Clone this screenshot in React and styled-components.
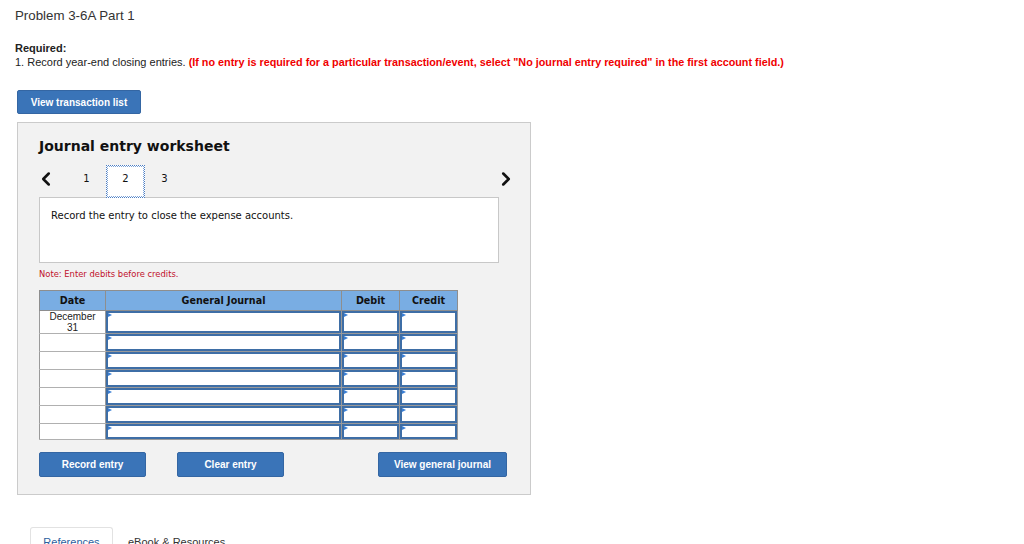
import React from "react";
import styled, { createGlobalStyle } from "styled-components";
import { ChevronLeft, ChevronRight } from "lucide-react";

const GlobalStyle = createGlobalStyle`
  body {
    margin: 0;
    background: #ffffff;
    font-family: "Liberation Sans", Arial, sans-serif;
    color: #333;
  }
`;

const Page = styled.div`
  padding: 8px 0 0 15px;
  width: 1009px;
  height: 536px;
  overflow: hidden;
`;

const Title = styled.h1`
  margin: 0;
  font-size: 13.3px;
  line-height: 16px;
  font-weight: normal;
  color: #333;
`;

const Required = styled.div`
  margin-top: 17px;
  font-size: 11px;
  line-height: 14px;
  color: #222;
`;

const Bold = styled.div`
  font-weight: bold;
`;

const Red = styled.span`
  color: #f00000;
  font-weight: bold;
  font-size: 10.8px;
`;

const BlueButton = styled.button`
  height: ${(p) => p.h || 25}px;
  width: ${(p) => p.w}px;
  padding: 0;
  border: 1px solid #3466a3;
  border-radius: 2px;
  background: #3a74b8;
  color: #fff;
  font-family: "Liberation Sans", Arial, sans-serif;
  font-size: 10px;
  font-weight: bold;
`;

const TopButton = styled(BlueButton)`
  margin: 21px 0 0 2px;
  display: block;
`;

const Panel = styled.div`
  margin: 8px 0 0 2px;
  width: 470px;
  height: 356px;
  border: 1px solid #cbcbcb;
  background: #f2f2f2;
  padding: 15px 21px 0 21px;
`;

const PanelTitle = styled.h2`
  margin: 0;
  font-family: "DejaVu Sans", Verdana, sans-serif;
  font-size: 14px;
  line-height: 17px;
  font-weight: bold;
  color: #111;
`;

const Pager = styled.div`
  margin-top: 10px;
  height: 33px;
  display: flex;
  align-items: center;
  position: relative;
  z-index: 1;
`;

const Arrow = styled.div`
  width: 28px;
  display: flex;
  align-items: center;
  padding-bottom: 6px;
  justify-content: ${(p) => (p.right ? "flex-end" : "flex-start")};
  color: #111;
  margin-left: ${(p) => (p.right ? "auto" : "-4px")};
  margin-right: ${(p) => (p.right ? "-8px" : "4px")};
`;

const PageTab = styled.div`
  width: 39px;
  height: 33px;
  box-sizing: border-box;
  display: flex;
  align-items: center;
  justify-content: center;
  padding-bottom: 6px;
  font-family: "DejaVu Sans", Verdana, sans-serif;
  font-size: 10px;
  color: #111;
  background: ${(p) => (p.active ? "#fff" : "transparent")};
  border: ${(p) => (p.active ? "1px dotted #4a7cc2" : "1px solid transparent")};
  outline: ${(p) => (p.active ? "1px dotted #7ea4d8" : "none")};
  outline-offset: -2px;
`;

const Description = styled.div`
  margin-top: -1px;
  border: 1px solid #c8c8c8;
  background: #fff;
  padding: 12px 0 0 11px;
  box-sizing: border-box;
  height: 66px;
  width: 460px;
  font-family: "DejaVu Sans", Verdana, sans-serif;
  font-size: 10px;
  color: #111;
`;

const Note = styled.div`
  margin-top: 5px;
  font-family: "DejaVu Sans", Verdana, sans-serif;
  font-size: 8.4px;
  line-height: 12px;
  color: #c0102a;
`;

const Table = styled.table`
  margin-top: 10px;
  width: 418px;
  border-collapse: collapse;
  table-layout: fixed;
  background: #fff;
`;

const Th = styled.th`
  height: 19px;
  padding: 0;
  background: #79ade3;
  border: 1px solid #8e8e8e;
  font-family: "DejaVu Sans", Verdana, sans-serif;
  font-size: 9.6px;
  font-weight: bold;
  color: #111;
  width: ${(p) => p.w}px;
`;

const DateCell = styled.td`
  height: ${(p) => p.h}px;
  padding: 0;
  border: 1px solid #9a9a9a;
  border-bottom-color: #b0b0b0;
  text-align: center;
  vertical-align: top;
  font-family: "Liberation Sans", Arial, sans-serif;
  font-size: 10px;
  line-height: 11px;
  color: #222;
`;

const InputCell = styled.td`
  height: ${(p) => p.h}px;
  padding: 0;
  border: 1px solid #9a9a9a;
  position: relative;
`;

const InputBox = styled.div`
  position: absolute;
  inset: 0;
  border: 2px solid #3e6ea6;
  background: #fff;

  &::before {
    content: "";
    position: absolute;
    left: 0;
    top: 0;
    border-left: 4px solid #3b7fd4;
    border-top: 2.5px solid transparent;
    border-bottom: 2.5px solid transparent;
  }
`;

const ButtonRow = styled.div`
  margin-top: 12px;
  display: flex;
  width: 468px;
  gap: 31px;
`;

const Spacer = styled.div`
  flex: 1;
`;

const Tabs = styled.div`
  margin-top: 26px;
  display: flex;
  align-items: flex-start;
  margin-left: 15px;
`;

const Tab = styled.div`
  height: 22px;
  padding: 0 ${(p) => (p.active ? 12 : 14)}px;
  box-sizing: border-box;
  border: 1px solid ${(p) => (p.active ? "#e2e2e2" : "transparent")};
  border-bottom: none;
  border-radius: 3px 3px 0 0;
  display: flex;
  align-items: flex-end;
  justify-content: center;
  font-size: 11px;
  line-height: 14px;
  color: ${(p) => (p.active ? "#2c5e9e" : "#333")};
  width: ${(p) => (p.active ? "83px" : "auto")};
  transform: translateY(6px);
`;

const rows = [22, 17, 17, 17, 17, 17, 15];

export default function App() {
  return (
    <>
      <GlobalStyle />
      <Page>
        <Title>Problem 3-6A Part 1</Title>
        <Required>
          <Bold>Required:</Bold>
          <div>
            1. Record year-end closing entries.{" "}
            <Red>
              (If no entry is required for a particular transaction/event, select "No journal entry
              required" in the first account field.)
            </Red>
          </div>
        </Required>
        <TopButton w={124} h={24}>View transaction list</TopButton>
        <Panel>
          <PanelTitle>Journal entry worksheet</PanelTitle>
          <Pager>
            <Arrow>
              <ChevronLeft size={22} strokeWidth={2.8} />
            </Arrow>
            <PageTab>1</PageTab>
            <PageTab active>2</PageTab>
            <PageTab>3</PageTab>
            <Arrow right>
              <ChevronRight size={22} strokeWidth={2.8} />
            </Arrow>
          </Pager>
          <Description>Record the entry to close the expense accounts.</Description>
          <Note>Note: Enter debits before credits.</Note>
          <Table>
            <thead>
              <tr>
                <Th w={65}>Date</Th>
                <Th w={235}>General Journal</Th>
                <Th w={57}>Debit</Th>
                <Th w={57}>Credit</Th>
              </tr>
            </thead>
            <tbody>
              {rows.map((h, i) => (
                <tr key={i}>
                  <DateCell h={h}>
                    {i === 0 ? (
                      <>
                        December
                        <br />
                        31
                      </>
                    ) : null}
                  </DateCell>
                  <InputCell h={h}>
                    <InputBox />
                  </InputCell>
                  <InputCell h={h}>
                    <InputBox />
                  </InputCell>
                  <InputCell h={h}>
                    <InputBox />
                  </InputCell>
                </tr>
              ))}
            </tbody>
          </Table>
          <ButtonRow>
            <BlueButton w={107}>Record entry</BlueButton>
            <BlueButton w={107}>Clear entry</BlueButton>
            <Spacer />
            <BlueButton w={129}>View general journal</BlueButton>
          </ButtonRow>
        </Panel>
        <Tabs>
          <Tab active>References</Tab>
          <Tab>eBook &amp; Resources</Tab>
        </Tabs>
      </Page>
    </>
  );
}
